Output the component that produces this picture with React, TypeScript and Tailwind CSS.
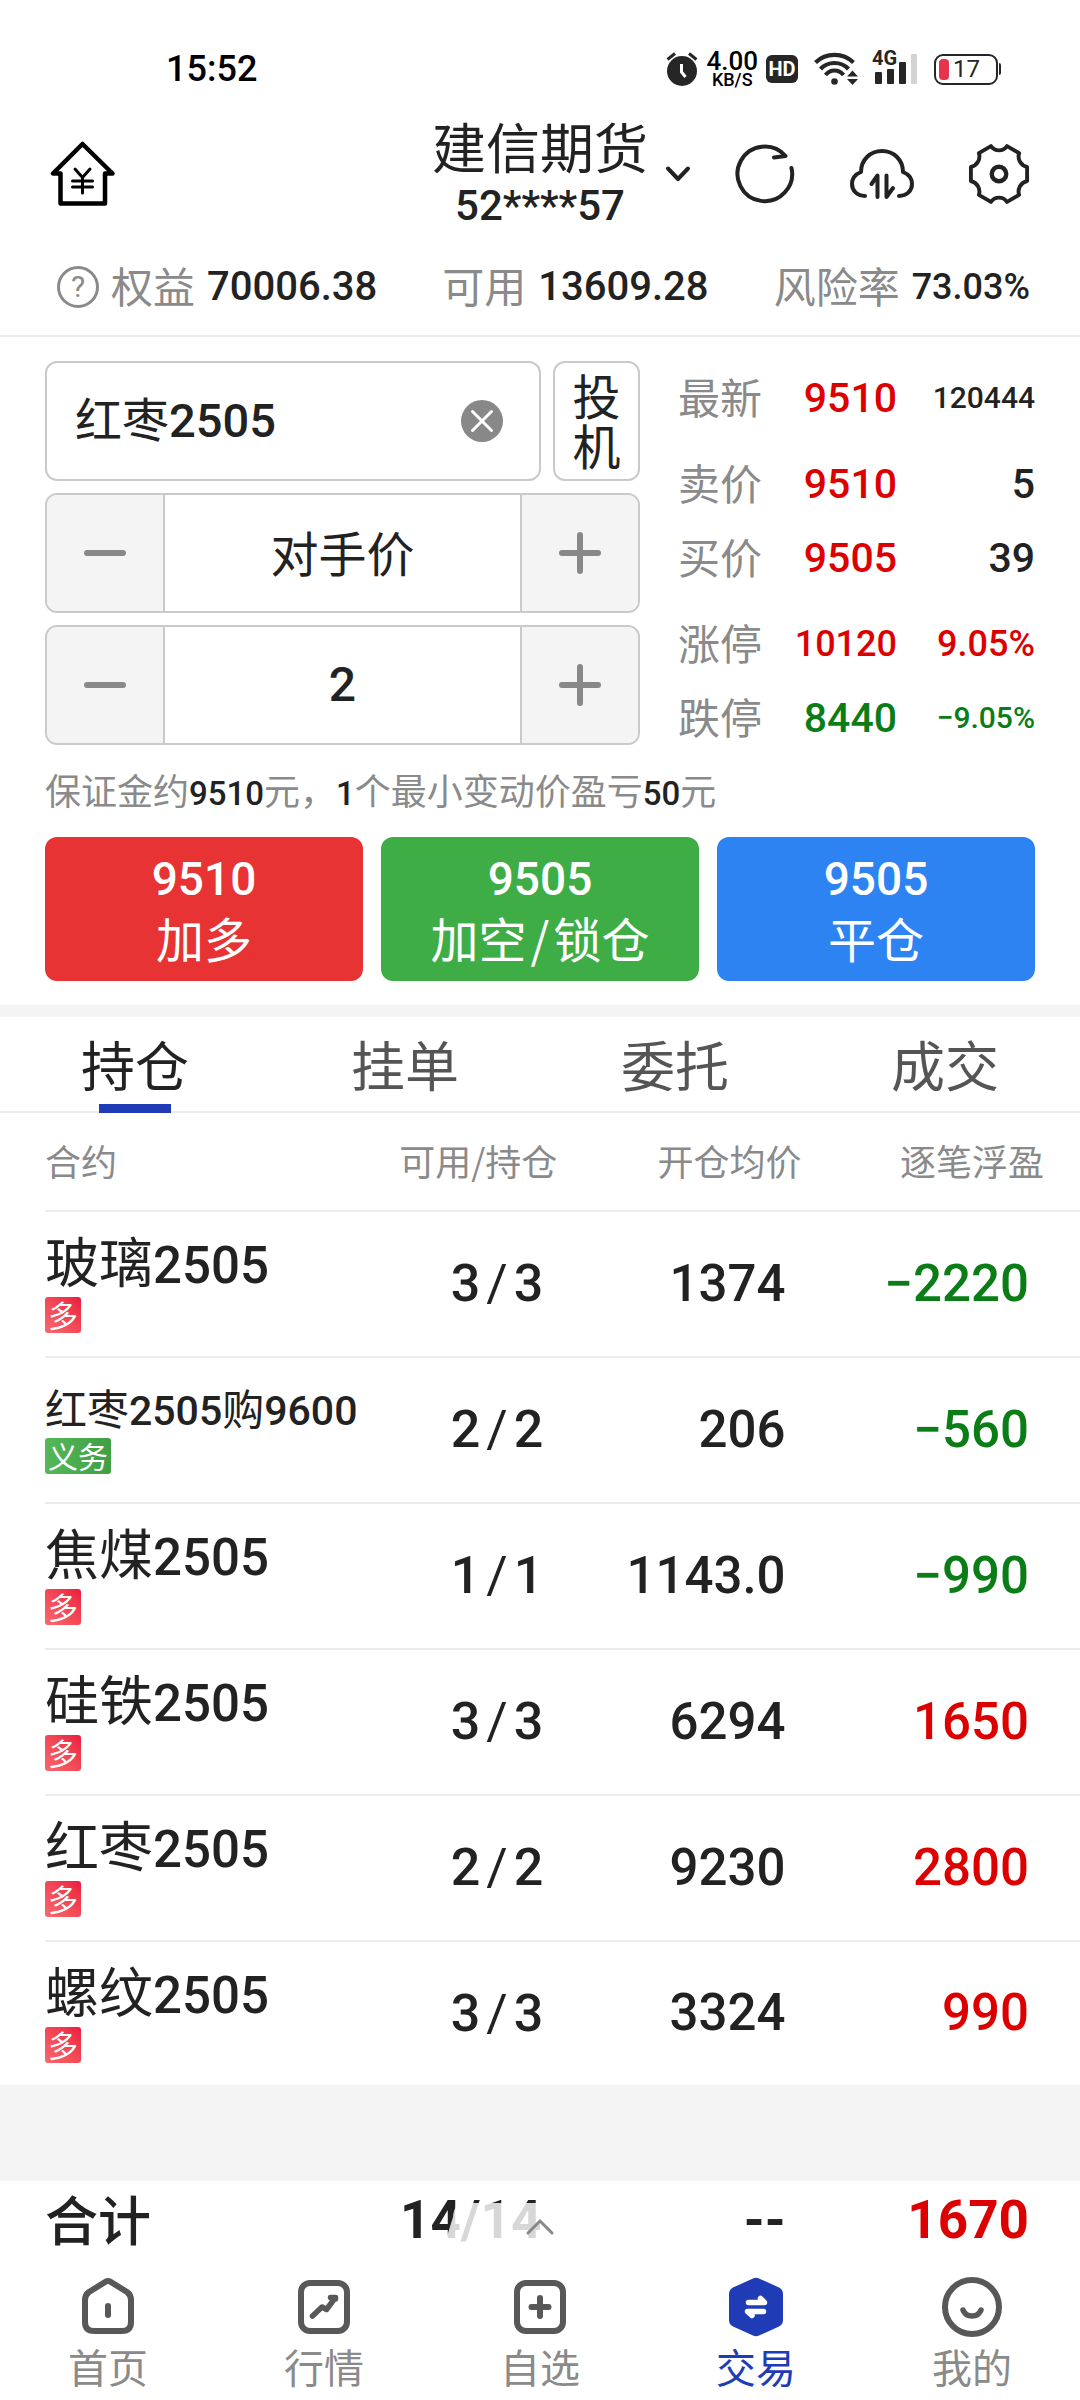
import React, { useState } from 'react';

const INK = 'text-[#222222]';
const NUM = "font-['Roboto','Noto_Sans_CJK_SC',sans-serif] font-medium";

type IconProps = { className?: string };

function AlarmIcon({ className }: IconProps) {
  return (
    <svg className={className} viewBox="0 0 32 34" fill="none" aria-hidden="true">
      <circle cx="16" cy="19" r="15" fill="#262626" />
      <path d="M1.500 7.500L9 1.500M30.500 7.500L23 1.500" stroke="#262626" strokeWidth="3" />
      <path d="M15.500 12V20L19.500 25" stroke="#fff" strokeWidth="3" />
    </svg>
  );
}

function WifiIcon({ className }: IconProps) {
  return (
    <svg className={className} viewBox="0 0 44 34" fill="none" aria-hidden="true">
      <g stroke="#262626" strokeWidth="4.200">
        <path d="M1.500 10.500C12 .3 29 .3 39.500 10.500" />
        <path d="M6.500 17C14 9 27 9 34.500 17" />
        <path d="M11.500 23C16.500 17 24.500 17 29.500 23" />
      </g>
      <circle cx="20.500" cy="29.500" r="3.300" fill="#262626" />
      <path d="M38.500 18.500L44 24.500H33ZM38.500 33L44 27H33Z" fill="#262626" />
    </svg>
  );
}

function SignalIcon({ className }: IconProps) {
  return (
    <svg className={className} viewBox="0 0 44 30" aria-hidden="true">
      <rect x="1" y="18" width="7" height="12" rx="1" fill="#262626" />
      <rect x="13" y="15" width="7" height="15" rx="1" fill="#262626" />
      <rect x="25" y="8" width="7" height="22" rx="1" fill="#262626" />
      <rect x="37" y="0" width="6" height="30" rx="1" fill="#d3d3d3" />
    </svg>
  );
}

function HouseYenIcon({ className }: IconProps) {
  return (
    <svg className={className} viewBox="0 0 66 66" fill="none" stroke="#000" strokeLinecap="round" strokeLinejoin="round" aria-hidden="true">
      <path d="M32.500 3L3 32.500H10.500V62.500H55V32.500H62.500Z" strokeWidth="4.500" />
      <path d="M25 28L32.500 36.500L40 28M32.500 37V52M22.500 40H42.500M22.500 46H42.500" strokeWidth="3" />
    </svg>
  );
}

function RefreshIcon({ className }: IconProps) {
  return (
    <svg className={className} viewBox="0 0 60 60" fill="none" stroke="#222" strokeWidth="4" strokeLinecap="round" strokeLinejoin="round" aria-hidden="true">
      <path d="M56.500 24A27.300 27.300 0 1 1 50.500 12L39 13.500" />
    </svg>
  );
}

function CloudIcon({ className }: IconProps) {
  return (
    <svg className={className} viewBox="0 0 66 52" fill="none" stroke="#222" strokeWidth="4" strokeLinecap="round" strokeLinejoin="round" aria-hidden="true">
      <path d="M16 48C8 48 3 42.500 3 36C3 30 7 26 12 24C12 12 21 3 33 3C45 3 54 12 54 24C59 26 63 30 63 36C63 42.500 58 48 50 48" />
      <path d="M28.500 49V27.500L22.500 36M37.500 27.500V49L44 40" />
    </svg>
  );
}

function GearIcon({ className }: IconProps) {
  return (
    <svg className={className} viewBox="0 0 64 64" fill="none" stroke="#222" strokeWidth="4" strokeLinejoin="round" aria-hidden="true">
      <path d="M61 39.300A11 11 0 0 0 52.800 53.600L40.300 60.800A10 10 0 0 0 23.700 60.800L11.200 53.600A11 11 0 0 0 3 39.300V24.700A11 11 0 0 0 11.200 10.400L23.700 3.200A10 10 0 0 0 40.300 3.200L52.800 10.400A11 11 0 0 0 61 24.700Z" />
      <circle cx="32" cy="32" r="7.500" strokeWidth="4.500" />
    </svg>
  );
}

function NavHome({ className }: IconProps) {
  return (
    <svg className={className} viewBox="0 0 60 60" fill="none" stroke="#585858" strokeWidth="6" strokeLinecap="round" strokeLinejoin="round" aria-hidden="true">
      <path d="M27.500 4.800Q30 3.200 32.500 4.800L49 15Q53 18 53 23V45Q53 54 44 54H16Q7 54 7 45V23Q7 18 11 15Z" />
      <path d="M30 29V38" />
    </svg>
  );
}

function NavChart({ className }: IconProps) {
  return (
    <svg className={className} viewBox="0 0 60 60" fill="none" stroke="#585858" strokeWidth="6" strokeLinecap="round" strokeLinejoin="round" aria-hidden="true">
      <rect x="7" y="6" width="46" height="48" rx="9" />
      <path d="M18.500 39L28 30L32.500 32.500L41 21M36.500 20.500H41.500V22" strokeWidth="5.500" />
    </svg>
  );
}

function NavPlus({ className }: IconProps) {
  return (
    <svg className={className} viewBox="0 0 60 60" fill="none" stroke="#585858" strokeWidth="6" strokeLinecap="round" aria-hidden="true">
      <rect x="7" y="6" width="46" height="48" rx="9" />
      <path d="M30 21V39M21.500 30H38.500" />
    </svg>
  );
}

function NavTrade({ className }: IconProps) {
  return (
    <svg className={className} viewBox="0 0 60 60" fill="none" strokeLinecap="round" strokeLinejoin="round" aria-hidden="true">
      <path d="M27 1.500Q30 0 33 1.500L53 10.500Q57 12.500 57 17V43Q57 47.500 53 49.500L33 58.500Q30 60 27 58.500L7 49.500Q3 47.500 3 43V17Q3 12.500 7 10.500Z" fill="#1f3cb6" />
      <path d="M22.500 25.500H38.500L34.500 21.500M37.500 34.500H21.500L26 38.500" stroke="#fff" strokeWidth="5.500" />
    </svg>
  );
}

function NavSmile({ className }: IconProps) {
  return (
    <svg className={className} viewBox="0 0 60 60" fill="none" stroke="#585858" strokeWidth="6" strokeLinecap="round" aria-hidden="true">
      <circle cx="30" cy="30" r="27" />
      <path d="M21 33C24 41 36 41 39 33" strokeWidth="5.500" />
    </svg>
  );
}

/* Sets runs of digits in the numeric face and leaves Chinese text in the body face. */
function Mixed({ text, numClass = '' }: { text: string; numClass?: string }) {
  return (
    <>
      {text.split(/(\d+)/).map((part, i) =>
        /^\d+$/.test(part) ? (
          <span key={i} className={`${NUM} leading-none ${numClass}`}>{part}</span>
        ) : (
          <React.Fragment key={i}>{part}</React.Fragment>
        ),
      )}
    </>
  );
}

function StatusBar() {
  return (
    <div className="flex h-[118px] items-center justify-between pt-5 pl-[166px] pr-[79px]">
      <span className={`${NUM} text-[36px] leading-none text-black`}>15:52</span>
      <div className="flex items-center">
        <AlarmIcon className="h-[34px] w-8" />
        <div className="ml-2 flex flex-col items-center font-['Roboto',sans-serif] font-medium text-black">
          <span className="text-[26px] leading-[22px]">4.00</span>
          <span className="text-[18px] leading-4">KB/S</span>
        </div>
        <span className="ml-2 flex h-7 w-8 items-center justify-center rounded-md bg-[#262626] font-['Roboto',sans-serif] text-[20px] leading-none font-bold text-white">HD</span>
        <WifiIcon className="ml-4 h-[34px] w-11" />
        <div className="relative ml-4 h-[30px] w-11">
          <SignalIcon className="h-[30px] w-11" />
          <span className="absolute -top-1 -left-0.5 bg-white font-['Roboto',sans-serif] text-[20px] leading-4 font-bold text-[#262626]">4G</span>
        </div>
        <div className="ml-4 flex items-center">
          <div className="flex h-[31px] w-16 items-center rounded-[9px] border-2 border-[#262626] pl-[3px]">
            <span className="h-[21px] w-[10px] rounded-[4px] bg-[#e9334a]" />
            <span className="ml-1 font-['Roboto',sans-serif] text-[24px] leading-none text-[#262626]">17</span>
          </div>
          <span className="ml-px h-3 w-0.5 rounded-r bg-[#262626]" />
        </div>
      </div>
    </div>
  );
}

function Header() {
  return (
    <header className="grid h-[110px] grid-cols-[1fr_auto_1fr] items-center px-[50px]">
      <button type="button" aria-label="主页" className="justify-self-start">
        <HouseYenIcon className="size-[66px]" />
      </button>
      <button type="button" className={`flex flex-col items-center gap-2 ${INK}`}>
        <span className="text-[54px] leading-[56px]">建信期货</span>
        <span className={`${NUM} text-[42px] leading-[48px]`}>52****57</span>
      </button>
      <div className="flex items-center pl-[17px]">
        <svg className="mr-11 h-[18px] w-[26px] shrink-0" viewBox="0 0 26 18" fill="none" stroke="#222" strokeWidth="4" strokeLinecap="round" strokeLinejoin="round" aria-hidden="true">
          <path d="M3 3.500L13 14L23 3.500" />
        </svg>
        <div className="flex flex-1 items-center justify-between">
          <button type="button" aria-label="刷新"><RefreshIcon className="size-[60px]" /></button>
          <button type="button" aria-label="云同步"><CloudIcon className="h-[52px] w-[66px]" /></button>
          <button type="button" aria-label="设置"><GearIcon className="size-[62px]" /></button>
        </div>
      </div>
    </header>
  );
}

function Summary() {
  return (
    <dl className="flex h-[109px] items-center justify-between border-b-2 border-[#ececec] pt-2.5 pl-[57px] pr-[50px] leading-[48px]">
      <div className="flex items-center">
        <span className="flex size-[42px] items-center justify-center rounded-full border-[3px] border-[#8a8a8a] font-['Roboto',sans-serif] text-[30px] leading-none text-[#8a8a8a]">?</span>
        <dt className="ml-3 pb-1 text-[42px] text-[#8a8a8a]">权益</dt>
        <dd className={`ml-3 text-[40px] ${NUM} ${INK}`}>70006.38</dd>
      </div>
      <div className="flex items-center">
        <dt className="pb-1 text-[42px] text-[#8a8a8a]">可用</dt>
        <dd className={`ml-3 text-[40px] ${NUM} ${INK}`}>13609.28</dd>
      </div>
      <div className="flex items-center">
        <dt className="pb-1 text-[42px] text-[#8a8a8a]">风险率</dt>
        <dd className={`ml-3 text-[36px] ${NUM} ${INK}`}>73.03%</dd>
      </div>
    </dl>
  );
}

function Stepper({ label, value, onChange, numeric }: { label: string; value: string; onChange: (v: string) => void; numeric?: boolean }) {
  const shift = (by: number) => {
    const n = parseInt(value, 10);
    if (!Number.isNaN(n)) onChange(String(Math.max(1, n + by)));
  };
  return (
    <div className="flex h-[120px] overflow-hidden rounded-xl border-2 border-[#cacaca]">
      <button type="button" aria-label={`${label}减`} onClick={() => shift(-1)} className="flex w-[118px] shrink-0 items-center justify-center border-r-2 border-[#cacaca] bg-[#f4f4f4]">
        <span className="h-1.5 w-[42px] rounded-full bg-[#888888]" />
      </button>
      <input
        aria-label={label}
        value={value}
        onChange={(e) => onChange(e.target.value)}
        className={`w-0 min-w-0 flex-1 bg-white text-center text-[48px] outline-none ${INK} ${numeric ? NUM : 'pb-1'}`}
      />
      <button type="button" aria-label={`${label}加`} onClick={() => shift(1)} className="flex w-[118px] shrink-0 items-center justify-center border-l-2 border-[#cacaca] bg-[#f4f4f4]">
        <svg className="size-[42px]" viewBox="0 0 42 42" stroke="#888" strokeWidth="6" strokeLinecap="round" aria-hidden="true">
          <path d="M3 21H39M21 3V39" />
        </svg>
      </button>
    </div>
  );
}

const RED = 'text-[#dd0000]';
const GREEN = 'text-[#0a7d17]';

const quoteGroups = [
  [{ label: '最新', price: '9510', tone: RED, size: 'text-[41px]', side: '120444', sideTone: INK, sideSize: 'text-[30px]' }],
  [
    { label: '卖价', price: '9510', tone: RED, size: 'text-[41px]', side: '5', sideTone: INK, sideSize: 'text-[41px]' },
    { label: '买价', price: '9505', tone: RED, size: 'text-[41px]', side: '39', sideTone: INK, sideSize: 'text-[41px]' },
  ],
  [
    { label: '涨停', price: '10120', tone: RED, size: 'text-[36px]', side: '9.05%', sideTone: RED, sideSize: 'text-[36px]' },
    { label: '跌停', price: '8440', tone: GREEN, size: 'text-[41px]', side: '−9.05%', sideTone: GREEN, sideSize: 'text-[30px]' },
  ],
];

function Quotes() {
  return (
    <div className="flex flex-col gap-3">
      {quoteGroups.map((group, i) => (
        <dl key={i}>
          {group.map((q) => (
            <div key={q.label} className="grid h-[74px] grid-cols-[auto_1fr_138px] items-center whitespace-nowrap">
              <dt className="pb-1 text-[42px] leading-[48px] text-[#8a8a8a]">{q.label}</dt>
              <dd className={`text-right leading-[48px] ${NUM} ${q.size} ${q.tone}`}>{q.price}</dd>
              <dd className={`text-right leading-[48px] ${NUM} ${q.sideSize} ${q.sideTone}`}>{q.side}</dd>
            </div>
          ))}
        </dl>
      ))}
    </div>
  );
}

function OrderPanel() {
  const [contract, setContract] = useState('红枣2505');
  const [price, setPrice] = useState('对手价');
  const [lots, setLots] = useState('2');
  return (
    <section className="px-[45px] pt-6 pb-6">
      <div className="grid grid-cols-[minmax(0,5fr)_minmax(0,3fr)] gap-[38px]">
        <div className="flex flex-col gap-3">
          <div className="flex gap-3">
            <div className="flex h-[120px] min-w-0 flex-1 items-center rounded-xl border-2 border-[#cacaca] pr-9 pl-7">
              <input
                aria-label="合约"
                value={contract}
                onChange={(e) => setContract(e.target.value)}
                className={`w-0 min-w-0 flex-1 font-['Roboto_Medium','Roboto','Noto_Sans_CJK_SC',sans-serif] text-[47px] font-normal outline-none ${INK}`}
              />
              <button type="button" aria-label="清除" className="shrink-0" onClick={() => setContract('')}>
                <svg className="size-[42px]" viewBox="0 0 42 42" aria-hidden="true">
                  <circle cx="21" cy="21" r="21" fill="#888" />
                  <path d="M11.500 11.500L30.500 30.500M30.500 11.500L11.500 30.500" stroke="#fff" strokeWidth="3" strokeLinecap="round" />
                </svg>
              </button>
            </div>
            <button type="button" className={`flex h-[120px] w-[87px] flex-col items-center justify-center rounded-xl border-2 border-[#cacaca] pb-1 text-[48px] leading-[50px] ${INK}`}>
              <span>投</span>
              <span>机</span>
            </button>
          </div>
          <Stepper label="价格" value={price} onChange={setPrice} />
          <Stepper label="手数" value={lots} onChange={setLots} numeric />
        </div>
        <Quotes />
      </div>
      <p className="mt-2.5 text-[36px] leading-[48px] text-[#8a8a8a]">
        <Mixed text="保证金约9510元，1个最小变动价盈亏50元" numClass="text-[33px] text-[#222222]" />
      </p>
      <div className="mt-6 grid grid-cols-3 gap-[18px] text-white">
        <button type="button" className="flex h-36 flex-col items-center justify-center rounded-xl bg-[#e73334]">
          <span className={`${NUM} text-[46px] leading-[56px]`}>9510</span>
          <span className="text-[48px] leading-[60px]">加多</span>
        </button>
        <button type="button" className="flex h-36 flex-col items-center justify-center rounded-xl bg-[#3fad45]">
          <span className={`${NUM} text-[46px] leading-[56px]`}>9505</span>
          <span className="text-[48px] leading-[60px]">加空<span className="px-1">/</span>锁仓</span>
        </button>
        <button type="button" className="flex h-36 flex-col items-center justify-center rounded-xl bg-[#2e83f2]">
          <span className={`${NUM} text-[46px] leading-[56px]`}>9505</span>
          <span className="text-[48px] leading-[60px]">平仓</span>
        </button>
      </div>
    </section>
  );
}

function Tabs() {
  const tabs = ['持仓', '挂单', '委托', '成交'];
  const [active, setActive] = useState(0);
  return (
    <div role="tablist" className="grid h-24 grid-cols-4 border-b-2 border-[#ececec]">
      {tabs.map((t, i) => (
        <button
          key={t}
          type="button"
          role="tab"
          aria-selected={i === active}
          onClick={() => setActive(i)}
          className={`relative flex justify-center pt-4 text-[54px] leading-[62px] ${i === active ? INK : 'text-[#555555]'}`}
        >
          {t}
          {i === active && <span className="absolute -bottom-0.5 h-[9px] w-[72px] bg-[#1f3cb6]" />}
        </button>
      ))}
    </div>
  );
}

const positions = [
  { name: '玻璃2505', side: '多', free: '3', held: '3', avg: '1374', profit: '−2220' },
  { name: '红枣2505购9600', side: '义务', free: '2', held: '2', avg: '206', profit: '−560' },
  { name: '焦煤2505', side: '多', free: '1', held: '1', avg: '1143.0', profit: '−990' },
  { name: '硅铁2505', side: '多', free: '3', held: '3', avg: '6294', profit: '1650' },
  { name: '红枣2505', side: '多', free: '2', held: '2', avg: '9230', profit: '2800' },
  { name: '螺纹2505', side: '多', free: '3', held: '3', avg: '3324', profit: '990' },
];

function Positions() {
  return (
    <div className="pl-[45px]">
      <table className="w-full table-fixed border-collapse">
        <colgroup>
          <col className="w-[31.5%]" />
          <col className="w-[18%]" />
          <col className="w-[23.6%]" />
          <col className="w-[26.9%]" />
        </colgroup>
        <thead>
          <tr className="h-[98px] border-b-2 border-[#ececec] text-[36px] leading-[48px] whitespace-nowrap text-[#8a8a8a]">
            <th scope="col" className="pb-1 text-left font-normal">合约</th>
            <th scope="col" className="pb-1 text-right font-normal">可用/持仓</th>
            <th scope="col" className="pb-1 text-right font-normal">开仓均价</th>
            <th scope="col" className="pr-9 pb-1 text-right font-normal">逐笔浮盈</th>
          </tr>
        </thead>
        <tbody>
          {positions.map((p) => {
            const long = p.name.length > 8;
            return (
              <tr key={p.name} className={`h-[146px] border-b-2 border-[#ececec] whitespace-nowrap last:h-36 last:border-b-0 ${INK}`}>
                <td className="pb-1">
                  <div className="flex flex-col items-start gap-1.5">
                    <span className={long ? 'text-[42px] leading-[48px]' : 'text-[54px] leading-[58px]'}>
                      <Mixed text={p.name} numClass={long ? 'text-[41px]' : 'text-[51px]'} />
                    </span>
                    <span
                      className={`flex h-9 items-center rounded-[3px] px-[3px] pb-0.5 text-[30px] leading-none text-white ${
                        p.side === '多' ? 'bg-linear-to-tr from-[#f7686c] to-[#ec1640]' : 'bg-linear-to-r from-[#55b75a] to-[#409e45]'
                      }`}
                    >
                      {p.side}
                    </span>
                  </div>
                </td>
                <td className={`pr-3.5 text-right text-[52px] ${NUM}`}>
                  {p.free}<span className="px-1.5 font-normal">/</span>{p.held}
                </td>
                <td className={`pr-4 text-right text-[51px] ${NUM}`}>{p.avg}</td>
                <td className={`pr-[51px] text-right text-[51px] ${NUM} ${p.profit.startsWith('−') ? GREEN : RED}`}>{p.profit}</td>
              </tr>
            );
          })}
        </tbody>
      </table>
    </div>
  );
}

function Totals() {
  return (
    <div className={`relative grid h-[78px] grid-cols-[31.5fr_18fr_23.6fr_26.9fr] items-center pl-[45px] font-['Roboto',sans-serif] text-[53px] leading-[60px] font-bold ${INK}`}>
      <span className="pb-1 font-['Noto_Sans_CJK_SC',sans-serif] font-medium">合计</span>
      <span className="pr-4 text-right">14/14</span>
      <span className="pr-4 text-right">--</span>
      <span className="pr-[51px] text-right text-[#dd0000]">1670</span>
      <button type="button" aria-label="展开" className="absolute bottom-0 left-1/2 -translate-x-1/2">
        <svg className="h-14 w-[200px]" viewBox="0 0 200 56" aria-hidden="true">
          <path d="M24 0H176Q186 0 187 14L200 56H0L13 14Q14 0 24 0Z" fill="#fff" fillOpacity=".82" />
          <path d="M88 30L100 18L112 30" fill="none" stroke="#888" strokeWidth="3" strokeLinecap="round" />
        </svg>
      </button>
    </div>
  );
}

const navItems = [
  { label: '首页', Icon: NavHome },
  { label: '行情', Icon: NavChart },
  { label: '自选', Icon: NavPlus },
  { label: '交易', Icon: NavTrade },
  { label: '我的', Icon: NavSmile },
];

function BottomNav() {
  return (
    <nav className="grid grid-cols-5 pt-[18px] pb-[9px]">
      {navItems.map(({ label, Icon }) => (
        <a
          key={label}
          href="#"
          aria-current={label === '交易' ? 'page' : undefined}
          className={`flex flex-col items-center gap-1 text-[40px] leading-[50px] ${label === '交易' ? 'text-[#1f3cb6]' : 'text-[#8a8a8a]'}`}
        >
          <Icon className="size-[60px]" />
          {label}
        </a>
      ))}
    </nav>
  );
}

export default function App() {
  return (
    <div className="flex min-h-screen flex-col bg-white font-['Noto_Sans_CJK_SC',sans-serif]">
      <StatusBar />
      <Header />
      <Summary />
      <OrderPanel />
      <div className="h-3 bg-[#f4f4f4]" />
      <Tabs />
      <Positions />
      <div className="min-h-20 flex-1 bg-[#f4f4f4]" />
      <Totals />
      <BottomNav />
    </div>
  );
}
